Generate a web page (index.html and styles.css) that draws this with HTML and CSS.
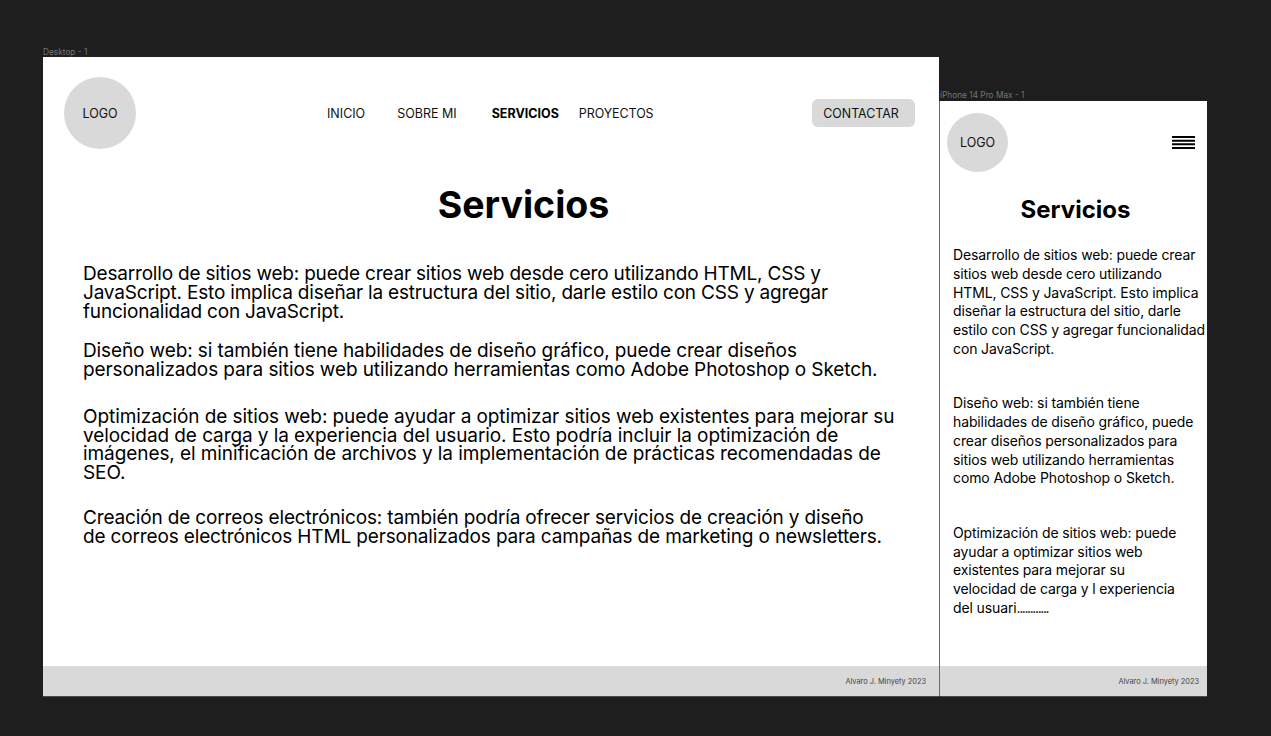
FILE: index.html
```
<!DOCTYPE html>
<html lang="es">
<head>
    <meta charset="UTF-8">
    <meta name="viewport" content="width=device-width, initial-scale=1.0">
    <title>Servicios</title>
    <link rel="stylesheet" href="styles.css">
</head>
<body>
    <div class="frame-label label-desktop">Desktop - 1</div>
    <section class="frame desktop">
        <header class="top">
            <div class="logo">LOGO</div>
            <nav class="menu">
                <a class="m-inicio">INICIO</a>
                <a class="m-sobre">SOBRE MI</a>
                <a class="m-serv">SERVICIOS</a>
                <a class="m-proy">PROYECTOS</a>
            </nav>
            <a class="btn-contact">CONTACTAR</a>
        </header>
        <main class="content">
            <h1>Servicios</h1>
            <p class="p1">Desarrollo de sitios web: puede crear sitios web desde cero utilizando HTML, CSS y<br>JavaScript. Esto implica diseñar la estructura del sitio, darle estilo con CSS y agregar<br>funcionalidad con JavaScript.</p>
            <p class="p2">Diseño web: si también tiene habilidades de diseño gráfico, puede crear diseños<br>personalizados para sitios web utilizando herramientas como Adobe Photoshop o Sketch.</p>
            <p class="p3">Optimización de sitios web: puede ayudar a optimizar sitios web existentes para mejorar su<br>velocidad de carga y la experiencia del usuario. Esto podría incluir la optimización de<br>imágenes, el minificación de archivos y la implementación de prácticas recomendadas de<br>SEO.</p>
            <p class="p4">Creación de correos electrónicos: también podría ofrecer servicios de creación y diseño<br>de correos electrónicos HTML personalizados para campañas de marketing o newsletters.</p>
        </main>
        <footer class="foot">Alvaro J. Minyety 2023</footer>
    </section>

    <div class="frame-label label-phone">iPhone 14 Pro Max - 1</div>
    <section class="frame phone">
        <header class="top">
            <div class="logo">LOGO</div>
            <svg class="burger" width="23" height="13" viewBox="0 0 23 13">
                <path d="M0 1H23M0 4.7H23M0 8.3H23M0 12H23" stroke="#000" stroke-width="2"/>
            </svg>
        </header>
        <main class="content">
            <h1>Servicios</h1>
            <p>Desarrollo de sitios web: puede crear<br>sitios web desde cero utilizando<br>HTML, CSS y JavaScript. Esto implica<br>diseñar la estructura del sitio, darle<br>estilo con CSS y agregar funcionalidad<br>con JavaScript.</p>
            <p>Diseño web: si también tiene<br>habilidades de diseño gráfico, puede<br>crear diseños personalizados para<br>sitios web utilizando herramientas<br>como Adobe Photoshop o Sketch.</p>
            <p>Optimización de sitios web: puede<br>ayudar a optimizar sitios web<br>existentes para mejorar su<br>velocidad de carga y l experiencia<br>del usuari<span class="dots">............</span></p>
        </main>
        <footer class="foot">Alvaro J. Minyety 2023</footer>
    </section>
</body>
</html>
```

FILE: styles.css
```
html, body {
    margin: 0;
    padding: 0;
}
body {
    width: 1271px;
    height: 736px;
    position: relative;
    overflow: hidden;
    background: #1e1e1e;
    font-family: 'Inter', sans-serif;
    color: #000;
}

/* los marcos van sobre un lienzo libre, como en el editor */
.frame {
    position: absolute;
    background: #fff;
    display: flex;
    flex-direction: column;
    overflow: hidden;
}
.desktop {
    left: 43px;
    top: 57px;
    width: 896px;
    height: 639px;
    box-shadow: 0 1px 0 #4a4a4a;
}
.phone {
    left: 940px;
    top: 101px;
    width: 267px;
    height: 595px;
    box-shadow: -1px 0 0 #6a6a6a, 0 1px 0 #4a4a4a;
}
.frame-label {
    position: absolute;
    font-size: 8.3px;
    line-height: 10px;
    color: #757575;
}
.label-desktop {
    left: 43px;
    top: 47px;
}
.label-phone {
    left: 940px;
    top: 90px;
}

.top {
    display: flex;
    align-items: center;
}
.logo {
    display: flex;
    align-items: center;
    justify-content: center;
    border-radius: 50%;
    background: #d9d9d9;
    font-size: 12.5px;
    color: #111;
    flex: none;
}
.desktop .top {
    height: 72px;
    padding: 20px 24px 0 21px;
}
.desktop .logo {
    width: 72px;
    height: 72px;
}
.menu {
    display: flex;
    font-size: 12.5px;
    color: #111;
    margin-left: 191px;
}
.m-inicio {
    margin-right: 32px;
}
.m-sobre {
    margin-right: 35px;
}
.m-serv {
    font-weight: 700;
    color: #000;
    margin-right: 20px;
}
.m-proy {
    letter-spacing: -0.1px;
}
.btn-contact {
    margin-left: auto;
    width: 103px;
    height: 28px;
    padding-right: 5px;
    box-sizing: border-box;
    border-radius: 6px;
    background: #d9d9d9;
    font-size: 12.4px;
    color: #111;
    display: flex;
    align-items: center;
    justify-content: center;
}

.content {
    flex: 1;
}
h1 {
    margin: 0;
    text-align: center;
    font-family: 'Inter', sans-serif;
    font-weight: 700;
}
p {
    margin: 0;
    white-space: nowrap;
}
.desktop .content {
    padding: 32px 0 0 40px;
}
.desktop h1 {
    font-size: 37.5px;
    line-height: 48px;
    margin-left: 25px;
    margin-bottom: 36px;
}
.desktop p {
    font-size: 19px;
    line-height: 18.75px;
}
.desktop .p1 {
    letter-spacing: -0.19px;
    margin-bottom: 21px;
}
.desktop .p2 {
    letter-spacing: -0.11px;
    margin-bottom: 28px;
}
.desktop .p3 {
    letter-spacing: -0.08px;
    margin-bottom: 26px;
}
.desktop .p4 {
    letter-spacing: -0.15px;
}

.phone .top {
    justify-content: space-between;
    padding: 12px 12px 0 7px;
}
.phone .logo {
    width: 61px;
    height: 59px;
}
.phone .content {
    padding: 23px 0 0 13px;
}
.phone h1 {
    font-size: 24px;
    line-height: 30px;
    margin-right: 9px;
    margin-bottom: 21px;
}
.phone p {
    font-size: 14px;
    line-height: 18.8px;
    letter-spacing: -0.12px;
    margin-bottom: 35.5px;
}
.dots {
    letter-spacing: -1.4px;
}

.foot {
    height: 30px;
    flex: none;
    background: #d9d9d9;
    font-size: 7.4px;
    color: #444;
    display: flex;
    align-items: center;
    justify-content: flex-end;
}
.desktop .foot {
    padding-right: 13px;
}
.phone .foot {
    padding-right: 8px;
}
```
